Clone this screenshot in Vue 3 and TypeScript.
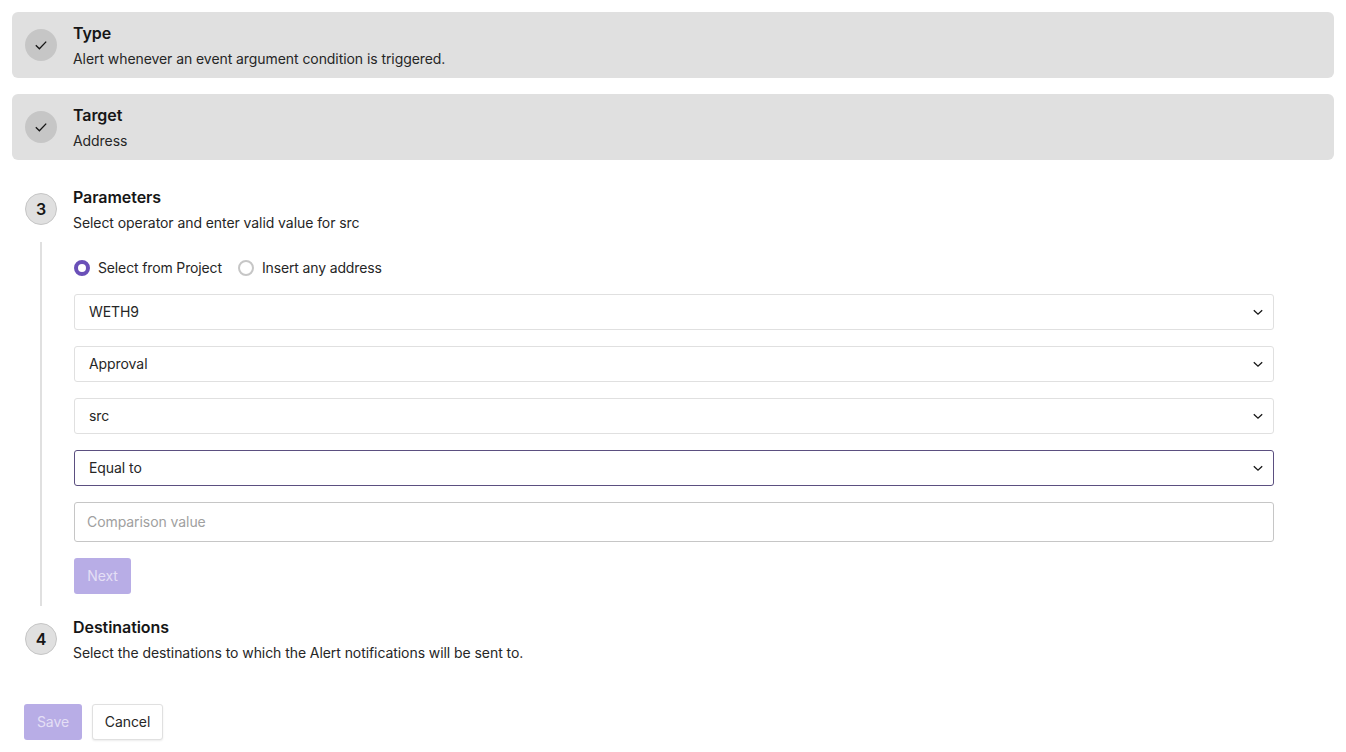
<script setup lang="ts">
import { ref } from 'vue';

const selects = [
  { label: 'WETH9', focused: false },
  { label: 'Approval', focused: false },
  { label: 'src', focused: false },
  { label: 'Equal to', focused: true },
];

const comparison = ref('');
</script>

<template>
  <div class="page">
    <div class="step done">
      <div class="circle">
        <svg width="16" height="16" viewBox="0 0 16 16" fill="none">
          <path d="M2.8 8.2 6.4 11.8 13.2 4.6" stroke="#161616" stroke-width="1.3" />
        </svg>
      </div>
      <div class="text">
        <div class="title">Type</div>
        <div class="sub">Alert whenever an event argument condition is triggered.</div>
      </div>
    </div>

    <div class="step done">
      <div class="circle">
        <svg width="16" height="16" viewBox="0 0 16 16" fill="none">
          <path d="M2.8 8.2 6.4 11.8 13.2 4.6" stroke="#161616" stroke-width="1.3" />
        </svg>
      </div>
      <div class="text">
        <div class="title">Target</div>
        <div class="sub">Address</div>
      </div>
    </div>

    <div class="open-step">
      <div class="step">
        <div class="circle">3</div>
        <div class="text">
          <div class="title">Parameters</div>
          <div class="sub">Select operator and enter valid value for src</div>
        </div>
      </div>

      <div class="body">
        <div class="radios">
          <label class="radio">
            <span class="dot checked"></span>
            Select from Project
          </label>
          <label class="radio">
            <span class="dot"></span>
            Insert any address
          </label>
        </div>

        <div
          v-for="item in selects"
          :key="item.label"
          class="select"
          :class="{ focused: item.focused }"
        >
          <span>{{ item.label }}</span>
          <svg width="12" height="12" viewBox="0 0 12 12" fill="none">
            <path d="M1.8 4.2 6 8.2 10.2 4.2" stroke="#161616" stroke-width="1.3" />
          </svg>
        </div>

        <input v-model="comparison" class="input" type="text" placeholder="Comparison value" />

        <div class="actions">
          <button class="btn primary next" type="button" disabled>Next</button>
        </div>
      </div>
    </div>

    <div class="step">
      <div class="circle">4</div>
      <div class="text">
        <div class="title">Destinations</div>
        <div class="sub">Select the destinations to which the Alert notifications will be sent to.</div>
      </div>
    </div>

    <div class="footer">
      <button class="btn primary save" type="button" disabled>Save</button>
      <button class="btn cancel" type="button">Cancel</button>
    </div>
  </div>
</template>

<style scoped>
.page {
  display: flex;
  flex-direction: column;
  gap: 16px;
  box-sizing: border-box;
  width: 1346px;
  height: 752px;
  padding: 12px;
  overflow: hidden;
  font-family: Inter, "Liberation Sans", sans-serif;
  letter-spacing: -0.07px;
  color: #161616;
  background: #fff;
}

.open-step {
  display: flex;
  flex-direction: column;
  margin-bottom: -16px;
}

.step {
  display: flex;
  gap: 16px;
  align-items: center;
  box-sizing: border-box;
  height: 66px;
  padding: 0 13px;
  border-radius: 6px;
}

.step.done {
  background: #e0e0e0;
}

.circle {
  display: flex;
  flex-shrink: 0;
  align-items: center;
  justify-content: center;
  box-sizing: border-box;
  width: 32px;
  height: 32px;
  font-size: 16px;
  font-weight: 600;
  background: #e0e0e0;
  border: 1px solid #c6c6c6;
  border-radius: 50%;
}

.done .circle {
  background: #c6c6c6;
  border: 0;
}

.text {
  display: flex;
  flex-direction: column;
  gap: 6px;
  padding-top: 2px;
}

.title {
  font-size: 16px;
  font-weight: 600;
  line-height: 20px;
}

.sub {
  font-size: 14px;
  line-height: 20px;
  color: #262626;
}

.body {
  display: flex;
  flex-direction: column;
  gap: 16px;
  width: 1200px;
  padding: 16px 0 12px 32px;
  margin-left: 28px;
  border-left: 2px solid #e0e0e0;
}

.radios {
  display: flex;
  gap: 16px;
  height: 20px;
}

.radio {
  display: flex;
  gap: 8px;
  align-items: center;
  font-size: 14px;
  line-height: 20px;
  letter-spacing: -0.14px;
  color: #262626;
}

.dot {
  box-sizing: border-box;
  width: 16px;
  height: 16px;
  background: #fff;
  border: 2px solid #c6c6c6;
  border-radius: 50%;
}

.dot.checked {
  border: 4px solid #6a50b8;
}

.select {
  display: flex;
  align-items: center;
  justify-content: space-between;
  box-sizing: border-box;
  height: 36px;
  padding: 0 9px 1px 14px;
  font-size: 14px;
  color: #262626;
  border: 1px solid #e0e0e0;
  border-radius: 3px;
}

.select svg {
  margin-top: 1px;
}

.select.focused {
  border-color: #5b4f80;
}

.input {
  box-sizing: border-box;
  width: 100%;
  height: 40px;
  padding: 0 12px 2px;
  font-family: inherit;
  font-size: 14px;
  letter-spacing: inherit;
  color: #161616;
  border: 1px solid #c6c6c6;
  border-radius: 3px;
  outline: none;
}

.input::placeholder {
  color: #a0a0a0;
  opacity: 1;
}

.actions {
  display: flex;
}

.btn {
  box-sizing: border-box;
  height: 36px;
  padding: 0 0 2px;
  font-family: inherit;
  font-size: 14px;
  letter-spacing: inherit;
  border-radius: 3px;
}

.primary {
  color: #e4dff5;
  background: #b8ade6;
  border: 0;
}

.next {
  width: 57px;
}

.footer {
  display: flex;
  gap: 10px;
  padding-left: 12px;
  margin-top: 16px;
}

.save {
  width: 58px;
}

.cancel {
  width: 71px;
  color: #262626;
  background: #fff;
  border: 1px solid #e0e0e0;
  box-shadow: 0 1px 2px rgb(0 0 0 / 8%);
}
</style>
